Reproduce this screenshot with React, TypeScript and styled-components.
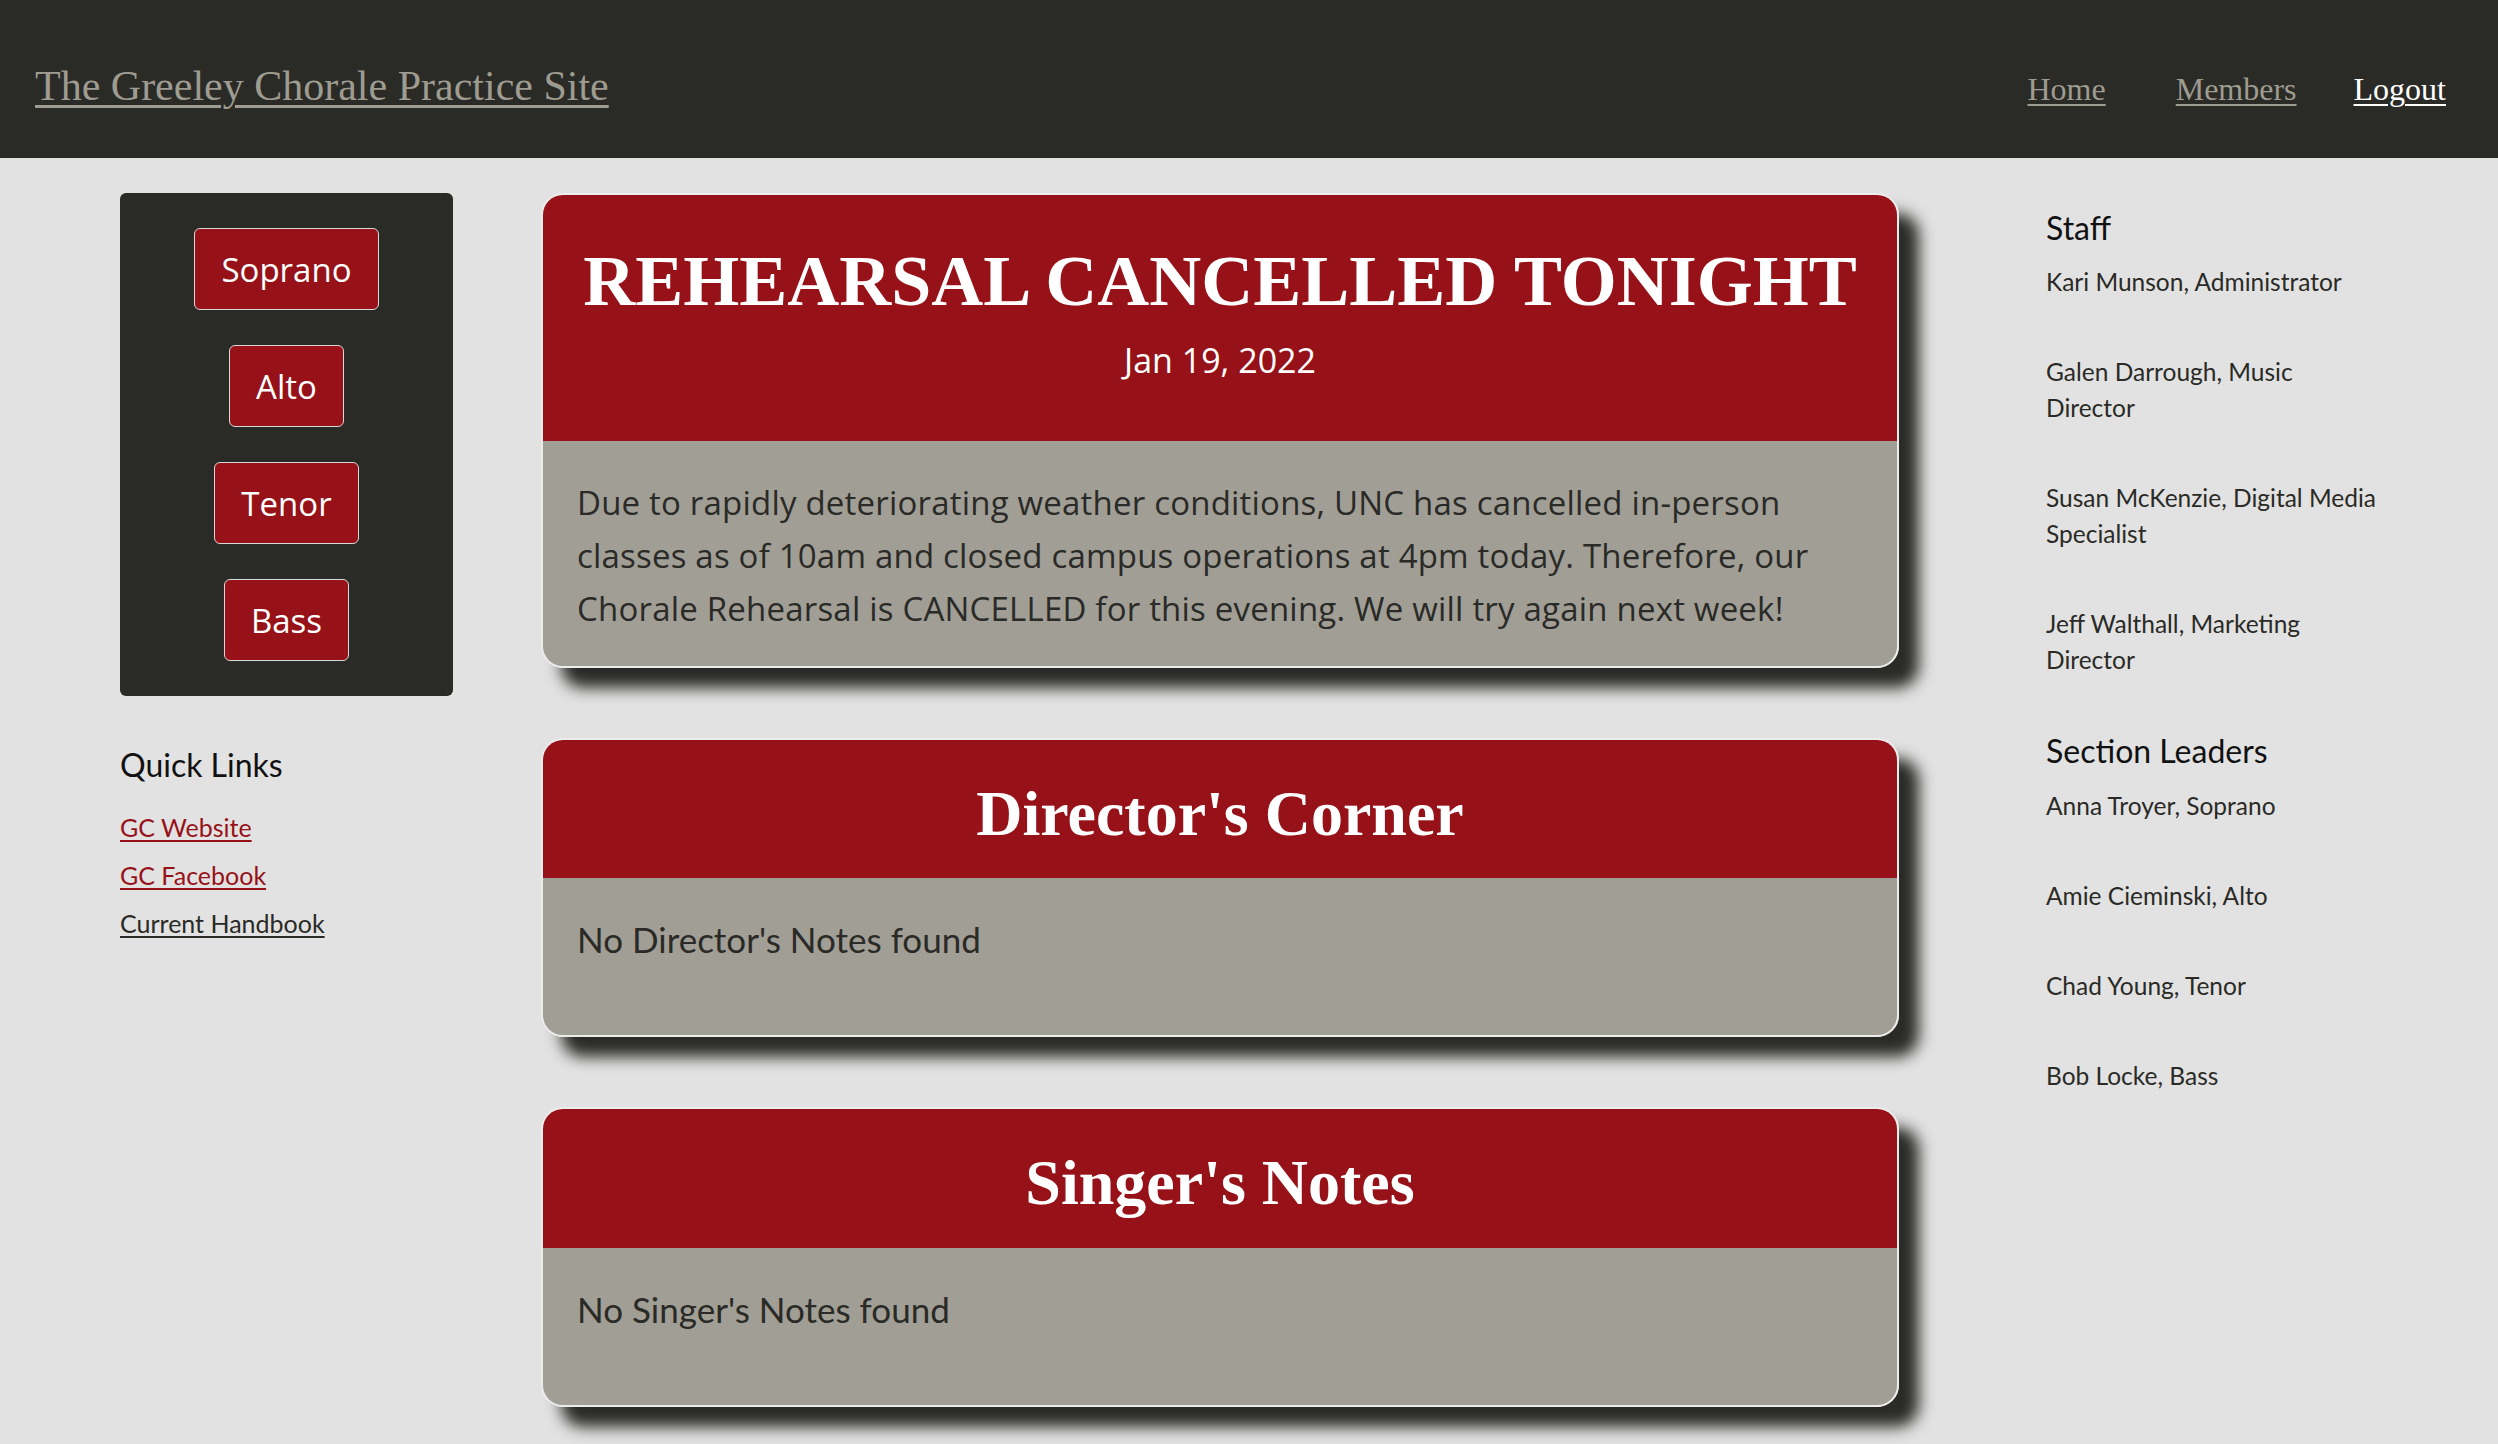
import React from "react";
import styled, { createGlobalStyle } from "styled-components";

const GlobalStyle = createGlobalStyle`
  html, body { margin: 0; padding: 0; }
  body {
    background: #e2e2e2;
    font-family: "Lato", "Open Sans", sans-serif;
    color: #2a2a26;
  }
  * { box-sizing: border-box; }
`;

const Header = styled.header`
  height: 158px;
  background: #2a2a26;
  display: flex;
  align-items: baseline;
  justify-content: space-between;
  padding: 62px 52px 0 35px;
`;

const SiteTitle = styled.a`
  font-family: "Liberation Serif", "Times New Roman", serif;
  font-size: 42px;
  color: #9e9b90;
  text-decoration: underline;
  text-decoration-thickness: 3px;
  text-underline-offset: 5px;
`;

const Nav = styled.nav`
  display: flex;
  align-items: baseline;
`;

const NavLink = styled.a<{ $active?: boolean; $gap?: number }>`
  margin-left: ${(p) => p.$gap ?? 0}px;
  font-family: "Liberation Serif", "Times New Roman", serif;
  font-size: 32px;
  color: ${(p) => (p.$active ? "#ffffff" : "#9e9b90")};
  text-decoration: underline;
  text-decoration-thickness: 2px;
  text-underline-offset: 4px;
`;

const Page = styled.div`
  display: flex;
  align-items: flex-start;
  padding: 35px 0 60px 120px;
`;

const LeftCol = styled.aside`
  width: 333px;
  margin-right: 88px;
  flex-shrink: 0;
`;

const SectionBox = styled.div`
  background: #2a2a26;
  border-radius: 6px;
  padding: 35px 0;
  display: flex;
  flex-direction: column;
  align-items: center;
  gap: 35px;
`;

const SectionButton = styled.button`
  height: 82px;
  padding: 0 26px;
  background: #961218;
  color: #ffffff;
  border: 1px solid #d8d8d8;
  border-radius: 6px;
  font-family: "Open Sans", "Segoe UI", sans-serif;
  font-size: 33px;
  cursor: pointer;
`;

const SideHeading = styled.h3<{ $top?: number }>`
  margin: ${(p) => p.$top ?? 0}px 0 0 0;
  font-family: "Lato", sans-serif;
  font-weight: 400;
  font-size: 32px;
  line-height: 1.2;
  color: #111;
`;

const LinkList = styled.div`
  display: flex;
  flex-direction: column;
  margin-top: 19px;
`;

const QuickLink = styled.a<{ $visited?: boolean }>`
  font-family: "Lato", sans-serif;
  font-size: 25px;
  line-height: 48px;
  width: fit-content;
  color: ${(p) => (p.$visited ? "#2a2a26" : "#961218")};
  text-decoration: underline;
  text-underline-offset: 3px;
`;

const Main = styled.main`
  width: 1358px;
  flex-shrink: 0;
  display: flex;
  flex-direction: column;
  gap: 70px;
`;

const Card = styled.section`
  border: 2px solid #ececec;
  border-radius: 22px;
  overflow: hidden;
  box-shadow: 20px 20px 15px #2a2a26;
`;

const CardHeader = styled.div<{ $pt: number; $pb: number }>`
  background: #961218;
  color: #ffffff;
  text-align: center;
  padding: ${(p) => p.$pt}px 20px ${(p) => p.$pb}px;
`;

const CardTitle = styled.h2<{ $size: number }>`
  margin: 0;
  font-family: "Liberation Serif", "Times New Roman", serif;
  font-weight: 700;
  font-size: ${(p) => p.$size}px;
  line-height: 1.15;
`;

const CardDate = styled.div`
  margin-top: 14px;
  font-family: "Open Sans", "Segoe UI", sans-serif;
  font-size: 34px;
`;

const CardBody = styled.div<{ $pt?: number; $pb?: number }>`
  background: #a19e96;
  padding: ${(p) => p.$pt ?? 35}px 34px ${(p) => p.$pb ?? 33}px;
  min-height: 157px;
`;

const Announcement = styled.p`
  margin: 0;
  font-family: "Open Sans", "Segoe UI", sans-serif;
  font-size: 33px;
  letter-spacing: 0.2px;
  line-height: 53px;
  color: #2a2a26;
`;

const EmptyNote = styled.p`
  margin: 0;
  font-family: "Lato", sans-serif;
  font-size: 35px;
  line-height: 53px;
  color: #2a2a26;
`;

const RightCol = styled.aside`
  width: 332px;
  margin-left: 147px;
  flex-shrink: 0;
  padding-top: 16px;
`;

const PeopleList = styled.div`
  margin-top: 17px;
`;

const Person = styled.p`
  margin: 0 0 54px 0;
  font-family: "Lato", sans-serif;
  font-size: 24.5px;
  line-height: 36px;
  color: #2a2a26;
`;

const staff = [
  "Kari Munson, Administrator",
  "Galen Darrough, Music Director",
  "Susan McKenzie, Digital Media Specialist",
  "Jeff Walthall, Marketing Director",
];

const leaders = [
  "Anna Troyer, Soprano",
  "Amie Cieminski, Alto",
  "Chad Young, Tenor",
  "Bob Locke, Bass",
];

export default function App() {
  return (
    <>
      <GlobalStyle />
      <Header>
        <SiteTitle href="#">The Greeley Chorale Practice Site</SiteTitle>
        <Nav>
          <NavLink href="#">Home</NavLink>
          <NavLink href="#" $gap={70}>
            Members
          </NavLink>
          <NavLink href="#" $gap={57} $active>
            Logout
          </NavLink>
        </Nav>
      </Header>
      <Page>
        <LeftCol>
          <SectionBox>
            <SectionButton>Soprano</SectionButton>
            <SectionButton>Alto</SectionButton>
            <SectionButton>Tenor</SectionButton>
            <SectionButton>Bass</SectionButton>
          </SectionBox>
          <SideHeading $top={50}>Quick Links</SideHeading>
          <LinkList>
            <QuickLink href="#">GC Website</QuickLink>
            <QuickLink href="#">GC Facebook</QuickLink>
            <QuickLink href="#" $visited>
              Current Handbook
            </QuickLink>
          </LinkList>
        </LeftCol>
        <Main>
          <Card>
            <CardHeader $pt={45} $pb={58}>
              <CardTitle $size={72}>REHEARSAL CANCELLED TONIGHT</CardTitle>
              <CardDate>Jan 19, 2022</CardDate>
            </CardHeader>
            <CardBody $pt={35} $pb={31}>
              <Announcement>
                Due to rapidly deteriorating weather conditions, UNC has cancelled in-person
                classes as of 10am and closed campus operations at 4pm today. Therefore, our
                Chorale Rehearsal is CANCELLED for this evening. We will try again next week!
              </Announcement>
            </CardBody>
          </Card>
          <Card>
            <CardHeader $pt={37} $pb={28}>
              <CardTitle $size={64}>Director's Corner</CardTitle>
            </CardHeader>
            <CardBody>
              <EmptyNote>No Director's Notes found</EmptyNote>
            </CardBody>
          </Card>
          <Card>
            <CardHeader $pt={37} $pb={28}>
              <CardTitle $size={64}>Singer's Notes</CardTitle>
            </CardHeader>
            <CardBody>
              <EmptyNote>No Singer's Notes found</EmptyNote>
            </CardBody>
          </Card>
        </Main>
        <RightCol>
          <SideHeading>Staff</SideHeading>
          <PeopleList>
            {staff.map((s) => (
              <Person key={s}>{s}</Person>
            ))}
          </PeopleList>
          <SideHeading>Section Leaders</SideHeading>
          <PeopleList>
            {leaders.map((s) => (
              <Person key={s}>{s}</Person>
            ))}
          </PeopleList>
        </RightCol>
      </Page>
    </>
  );
}
